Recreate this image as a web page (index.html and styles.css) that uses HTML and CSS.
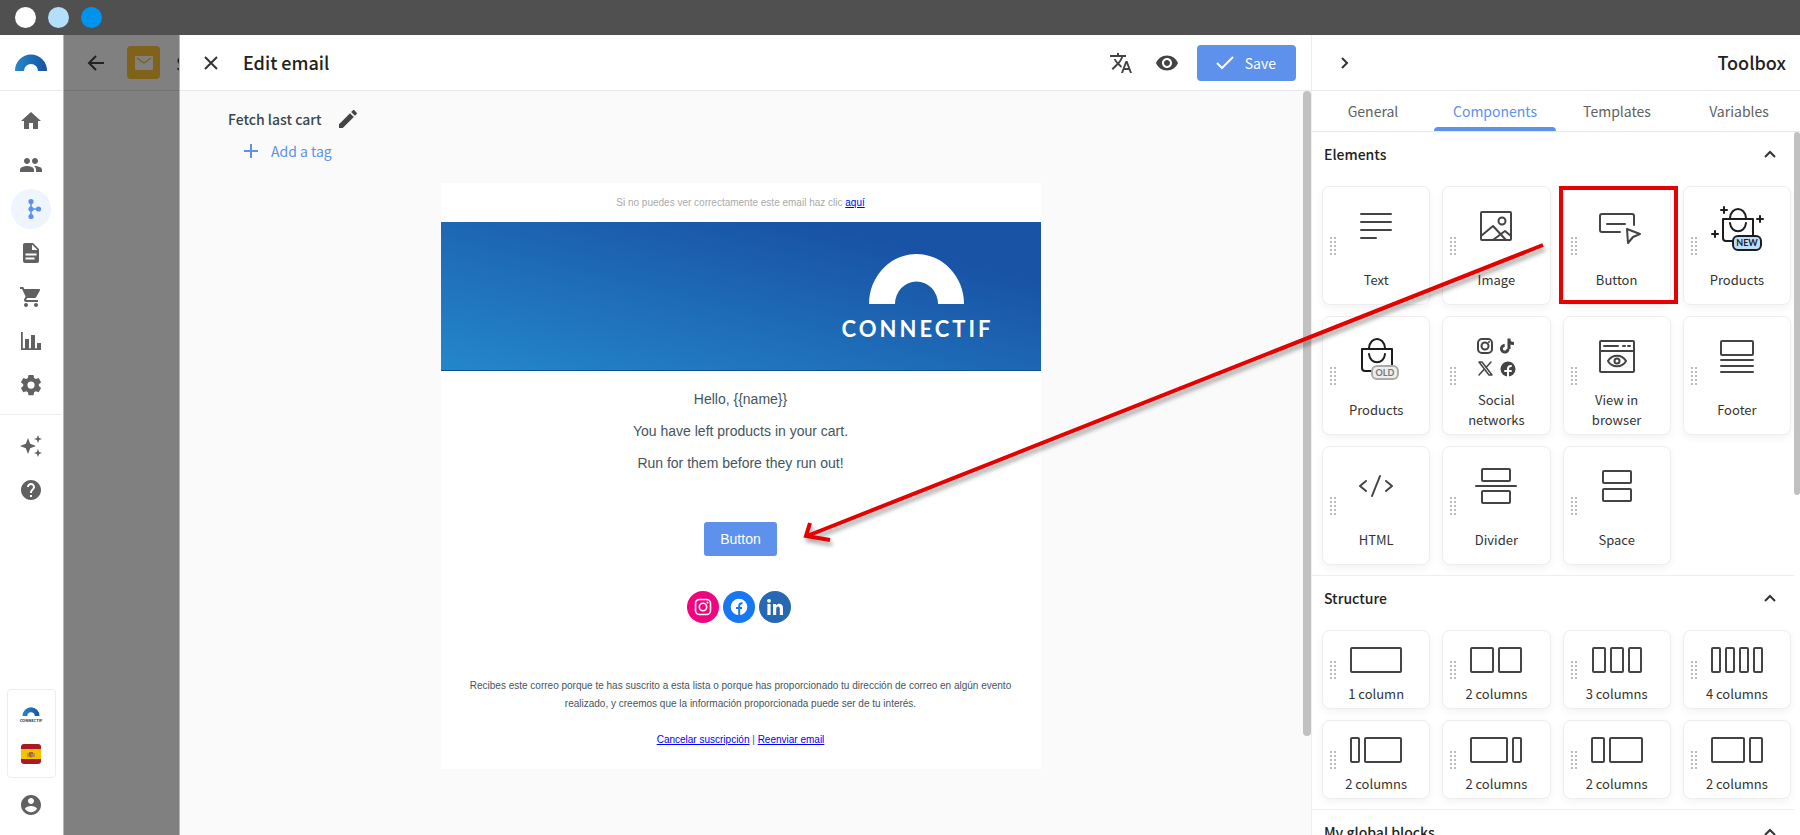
FILE: index.html
```html
<!DOCTYPE html>
<html lang="en">
<head>
    <meta charset="UTF-8">
    <meta name="viewport" content="width=device-width, initial-scale=1.0">
    <title>Edit email</title>
    <link rel="stylesheet" href="styles.css">
</head>
<body>
    <div class="window-bar">
        <span class="dot white"></span>
        <span class="dot light"></span>
        <span class="dot blue"></span>
    </div>

    <div class="app">
        <!-- Sidebar -->
        <nav class="sidebar">
            <a class="brand" href="#" aria-label="Connectif">
                <svg width="32" height="17" viewBox="0 0 32 17"><defs><linearGradient id="arc" x1="0" x2="1"><stop offset="0" stop-color="#2588cc"/><stop offset="1" stop-color="#1851a3"/></linearGradient></defs><path fill="url(#arc)" d="M0 17a16 16.500 0 0 1 32 0h-9a7 7 0 0 0-14 0z"/></svg>
            </a>
            <div class="nav-group">
                <a href="#" aria-label="Home"><svg viewBox="0 0 24 24"><path d="M10 20v-6h4v6h5v-8h3L12 3 2 12h3v8z"/></svg></a>
                <a href="#" aria-label="Contacts"><svg viewBox="0 0 24 24"><path d="M16 11c1.660 0 2.990-1.340 2.990-3S17.660 5 16 5c-1.660 0-3 1.340-3 3s1.340 3 3 3zm-8 0c1.660 0 2.990-1.340 2.990-3S9.660 5 8 5C6.340 5 5 6.340 5 8s1.340 3 3 3zm0 2c-2.330 0-7 1.170-7 3.500V19h14v-2.500c0-2.330-4.670-3.500-7-3.500zm8 0c-.29 0-.62.020-.97.050 1.160.84 1.970 1.970 1.970 3.450V19h6v-2.500c0-2.330-4.670-3.500-7-3.500z"/></svg></a>
                <a class="active" href="#" aria-label="Workflows"><svg viewBox="0 0 24 24"><path d="M11.200 4h1.600v16h-1.600zM12 11.200h8v1.600h-8z"/><circle cx="12" cy="4.500" r="2.600"/><circle cx="12" cy="12" r="2.600"/><circle cx="12" cy="19.500" r="2.600"/><circle cx="19.500" cy="12" r="2.600"/></svg></a>
                <a href="#" aria-label="Content"><svg viewBox="0 0 24 24"><path fill-rule="evenodd" d="M14 2H6c-1.100 0-2 .9-2 2v16c0 1.100.9 2 2 2h12c1.100 0 2-.9 2-2V8l-6-6zm1.500 16.500H6.500v-2h9zm2-4h-11v-2h11zM13 9V3.500L18.500 9H13z"/></svg></a>
                <a href="#" aria-label="Store"><svg viewBox="0 0 24 24"><path d="M7 18c-1.100 0-1.990.9-1.990 2S5.900 22 7 22s2-.9 2-2-.9-2-2-2zM1 2v2h2l3.600 7.590-1.350 2.450c-.16.280-.25.610-.25.960 0 1.100.9 2 2 2h12v-2H7.420c-.14 0-.25-.11-.25-.25l.03-.12.900-1.630h7.450c.75 0 1.410-.41 1.750-1.030l3.580-6.490c.08-.14.120-.31.120-.48 0-.55-.45-1-1-1H5.210l-.94-2H1zm16 16c-1.100 0-1.990.9-1.990 2s.890 2 1.990 2 2-.9 2-2-.9-2-2-2z"/></svg></a>
                <a href="#" aria-label="Reports"><svg viewBox="0 0 24 24"><path d="M2 3h1.800v16.200H6V10h4v9.200h2V6h4v13.200h2V14h4v7H2z"/></svg></a>
                <a href="#" aria-label="Settings"><svg viewBox="0 0 24 24"><path fill-rule="evenodd" d="M9.500 2h5l.6 3 1.700 1 2.900-1 2.400 4.200-2.300 2v1.800l2.300 2-2.400 4.200-2.900-1-1.700 1-.6 3h-5l-.6-3-1.700-1-2.900 1L1.900 15l2.300-2v-1.800l-2.300-2L4.300 5l2.900 1 1.700-1zM12 8.500a3.600 3.600 0 1 0 0 7.200 3.600 3.600 0 0 0 0-7.200z"/></svg></a>
            </div>
            <div class="nav-group second">
                <a href="#" aria-label="Assistant"><svg viewBox="0 0 24 24"><path d="M9 4l2.200 5.800L17 12l-5.800 2.200L9 20l-2.200-5.800L1 12l5.800-2.200zM19 1l1.100 2.900L23 5l-2.900 1.100L19 9l-1.100-2.900L15 5l2.900-1.100zM19 15l1.100 2.900L23 19l-2.900 1.100L19 23l-1.100-2.900L15 19l2.900-1.100z"/></svg></a>
                <a href="#" aria-label="Help"><svg viewBox="0 0 24 24"><path d="M12 2C6.480 2 2 6.480 2 12s4.480 10 10 10 10-4.480 10-10S17.520 2 12 2zm1 17h-2v-2h2v2zm2.070-7.750l-.9.920C13.450 12.900 13 13.500 13 15h-2v-.5c0-1.100.45-2.100 1.170-2.830l1.240-1.260c.37-.36.590-.86.590-1.410 0-1.100-.9-2-2-2s-2 .9-2 2H8c0-2.210 1.790-4 4-4s4 1.790 4 4c0 .88-.36 1.680-.93 2.250z"/></svg></a>
            </div>
            <div class="account">
                <a class="store-logo" href="#">
                    <svg width="18" height="9" viewBox="0 0 32 17"><path fill="url(#arc)" d="M0 17a16 16.500 0 0 1 32 0h-9a7 7 0 0 0-14 0z"/></svg>
                    <span>CONNECTIF</span>
                </a>
                <a class="flag" href="#" aria-label="Español"><svg width="20" height="20" viewBox="0 0 20 20"><rect width="20" height="20" rx="3" fill="#a91a20"/><path fill="#f3c300" d="M0 5h20v10H0z"/><path fill="#a5602c" d="M6.500 9h1v4h-1zM12.500 9h1v4h-1zM8 8h4v4.500l-2 1-2-1z"/><path fill="#8c9a8a" d="M10 10h2v2h-2z"/></svg></a>
            </div>
            <a class="profile" href="#" aria-label="Profile"><svg viewBox="0 0 24 24"><path d="M12 2C6.480 2 2 6.480 2 12s4.480 10 10 10 10-4.480 10-10S17.520 2 12 2zm0 3c1.660 0 3 1.340 3 3s-1.340 3-3 3-3-1.340-3-3 1.340-3 3-3zm0 14.200c-2.500 0-4.710-1.280-6-3.220.03-1.990 4-3.080 6-3.080 1.990 0 5.970 1.090 6 3.080-1.290 1.940-3.500 3.220-6 3.220z"/></svg></a>
        </nav>

        <!-- Workflow behind the dialog -->
        <div class="backdrop">
            <div class="backdrop-head">
                <svg width="18" height="18" viewBox="0 0 18 18"><path d="M17 9H2M9 2L2 9l7 7" fill="none" stroke="#222" stroke-width="2"/></svg>
                <span class="mail-badge"><svg width="18" height="14" viewBox="0 0 18 14"><rect width="18" height="14" rx="1" fill="#808080"/><path d="M2 2l7 5 7-5" fill="none" stroke="#80621a" stroke-width="1.500"/></svg></span>
                <span class="backdrop-title">S</span>
            </div>
        </div>

        <!-- Editor -->
        <main class="editor">
            <header class="editor-head">
                <button class="icon-btn" aria-label="Close"><svg width="16" height="16" viewBox="0 0 16 16"><path d="M2 2l12 12M14 2L2 14" fill="none" stroke="#333" stroke-width="2"/></svg></button>
                <h1>Edit email</h1>
                <button class="icon-btn" aria-label="Translate"><svg width="24" height="24" viewBox="0 0 24 24"><path fill="#444" d="M12.870 15.070l-2.540-2.510.03-.03c1.740-1.940 2.980-4.170 3.710-6.530H17V4h-7V2H8v2H1v1.990h11.170C11.500 7.920 10.440 9.750 9 11.350 8.070 10.320 7.300 9.190 6.690 8h-2c.73 1.630 1.730 3.170 2.980 4.560l-5.090 5.020L4 19l5-5 3.110 3.110.76-2.040zM18.500 10h-2L12 22h2l1.120-3h4.750L21 22h2l-4.500-12zm-2.620 7l1.620-4.330L19.120 17h-3.240z"/></svg></button>
                <button class="icon-btn" aria-label="Preview"><svg width="24" height="24" viewBox="0 0 24 24"><path fill="#444" d="M12 4.500C7 4.500 2.730 7.610 1 12c1.730 4.390 6 7.500 11 7.500s9.270-3.110 11-7.500c-1.730-4.390-6-7.500-11-7.500zM12 17c-2.760 0-5-2.240-5-5s2.240-5 5-5 5 2.240 5 5-2.240 5-5 5zm0-8c-1.660 0-3 1.340-3 3s1.340 3 3 3 3-1.340 3-3-1.340-3-3-3z"/></svg></button>
                <button class="save"><svg width="20" height="16" viewBox="0 0 20 16"><path d="M2 8l5 5L18 2" fill="none" stroke="#fff" stroke-width="2"/></svg>Save</button>
            </header>
            <div class="canvas">
                <div class="email-name">
                    <span>Fetch last cart</span>
                    <button class="icon-btn" aria-label="Rename"><svg width="24" height="24" viewBox="0 0 24 24"><path fill="#444" d="M3 17.250V21h3.750L17.810 9.940l-3.750-3.750L3 17.250zM20.710 7.040c.39-.39.390-1.020 0-1.410l-2.340-2.340c-.39-.39-1.020-.39-1.410 0l-1.830 1.830 3.750 3.750 1.830-1.830z"/></svg></button>
                </div>
                <button class="add-tag"><svg width="16" height="16" viewBox="0 0 16 16"><path d="M8 1v14M1 8h14" fill="none" stroke="#5d91ec" stroke-width="2"/></svg>Add a tag</button>

                <article class="email">
                    <p class="view-online">Si no puedes ver correctamente este email haz clic <a href="#">aquí</a></p>
                    <div class="banner">
                        <div class="banner-logo">
                            <svg width="95" height="51" viewBox="0 0 95 51"><path fill="#fff" d="M0 51a47.500 50 0 0 1 95 0H69a21 22 0 0 0-43 0z"/></svg>
                            <span>CONNECTIF</span>
                        </div>
                    </div>
                    <div class="message">
                        <p>Hello, {{name}}</p>
                        <p>You have left products in your cart.</p>
                        <p>Run for them before they run out!</p>
                    </div>
                    <button class="email-btn">Button</button>
                    <div class="social">
                        <a href="#" aria-label="Instagram"><svg viewBox="0 0 32 32"><circle cx="16" cy="16" r="16" fill="#f0047f"/><g fill="none" stroke="#fff" stroke-width="1.600"><rect x="8.500" y="8.500" width="15" height="15" rx="4"/><circle cx="16" cy="16" r="3.700"/></g><circle cx="20.500" cy="11.500" r="1" fill="#fff"/></svg></a>
                        <a href="#" aria-label="Facebook"><svg viewBox="0 0 32 32"><circle cx="16" cy="16" r="16" fill="#1877f2"/><circle cx="16" cy="16" r="8.300" fill="#fff"/><path d="M16.200 25v-10c0-2 1-2.800 3.300-2.600M13 17h6" fill="none" stroke="#1877f2" stroke-width="2"/></svg></a>
                        <a href="#" aria-label="LinkedIn"><svg viewBox="0 0 32 32"><circle cx="16" cy="16" r="16" fill="#2867b2"/><circle cx="10" cy="9.800" r="1.900" fill="#fff"/><path fill="#fff" d="M8.400 13h3.200v11H8.400zM14 13h3v1.500c1.500-2.600 7-2.600 7 2.500v7h-3.200v-6.200c0-3-3.600-2.800-3.600 0V24H14z"/></svg></a>
                    </div>
                    <footer class="legal">
                        <p>Recibes este correo porque te has suscrito a esta lista o porque has proporcionado tu dirección de correo en algún evento realizado, y creemos que la información proporcionada puede ser de tu interés.</p>
                        <p><a href="#">Cancelar suscripción</a> | <a href="#">Reenviar email</a></p>
                    </footer>
                </article>
            </div>
            <div class="scroll-thumb"></div>
        </main>

        <!-- Toolbox -->
        <aside class="toolbox">
            <header class="toolbox-head">
                <button class="icon-btn" aria-label="Collapse"><svg width="12" height="14" viewBox="0 0 12 14"><path d="M3 2l5 5-5 5" fill="none" stroke="#333" stroke-width="2"/></svg></button>
                <h2>Toolbox</h2>
            </header>
            <div class="tabs">
                <button>General</button>
                <button class="active">Components</button>
                <button>Templates</button>
                <button>Variables</button>
            </div>
            <div class="toolbox-body">
                <section>
                    <div class="section-head">
                        <h3>Elements</h3>
                        <button class="icon-btn" aria-label="Collapse elements"><svg width="14" height="10" viewBox="0 0 14 10"><path d="M2 8l5-5 5 5" fill="none" stroke="#333" stroke-width="2"/></svg></button>
                    </div>
                    <div class="cards">
                        <button class="card">
                            <span class="glyph"><svg width="32" height="28" viewBox="0 0 32 28"><path d="M1 2h30M1 10h30M1 18h30M1 26h15"/></svg></span>
                            <span class="label">Text</span>
                        </button>
                        <button class="card">
                            <span class="glyph"><svg width="32" height="30" viewBox="0 0 32 30"><rect x="1" y="1" width="30" height="28" rx="1"/><circle cx="22" cy="10" r="3.500"/><path d="M1 25l12-10 13 14M13 29l12-9 6 5"/></svg></span>
                            <span class="label">Image</span>
                        </button>
                        <button class="card marked">
                            <span class="glyph"><svg width="42" height="32" viewBox="-3 -3 42 32"><path d="M21 19H3a2 2 0 0 1-2-2V3a2 2 0 0 1 2-2h30a2 2 0 0 1 2 2v9M8 11h18M28 16l13 5-7 3-5 6z"/></svg></span>
                            <span class="label">Button</span>
                        </button>
                        <button class="card">
                            <span class="glyph"><svg width="52" height="44" viewBox="0 -3 52 44"><g stroke="#1d1d1d"><path d="M12 12h30v22H15a3 3 0 0 1-3-3zM19 11c1-12 15-12 16 0M19 16c1 11 15 11 16 0M13 0v6M10 3h6M49 9v6M46 12h6M4 24v6M1 27h6"/><rect x="22" y="29" width="28" height="14" rx="5" fill="#bbdefb"/></g><text x="36" y="39">NEW</text></svg></span>
                            <span class="label">Products</span>
                        </button>
                        <button class="card">
                            <span class="glyph"><svg width="38" height="42" viewBox="-4 -3 38 42"><g stroke="#1d1d1d"><path d="M1 11h30v22H4a3 3 0 0 1-3-3zM8 10c1-12 15-12 16 0M8 16c1 11 15 11 16 0"/></g><rect x="11" y="28" width="26" height="13" rx="5" fill="#eee" stroke="#aaa"/><text class="old" x="24" y="38">OLD</text></svg></span>
                            <span class="label">Products</span>
                        </button>
                        <button class="card">
                            <span class="glyph"><svg width="38" height="40" viewBox="0 -2 38 40"><rect x="1" y="1" width="14" height="14" rx="4"/><circle cx="8" cy="8" r="3.500"/><circle cx="12" cy="4" r="1" fill="#444" stroke="none"/><path stroke-width="3" stroke-linecap="butt" d="M31 10.500a3.300 3.300 0 1 1-3.300-3M32 0.500v10.500M32 1.500c0 3 2 4 5 4"/><path stroke-width="1.500" d="M2 24h3l10 13h-3zM14 24L9 29.500M7 31.500L2 37"/><circle cx="31" cy="31" r="7.500" fill="#444" stroke="none"/><path stroke="#fff" d="M31 39v-8c0-2 1-3 3-3M28 33h6"/></svg></span>
                            <span class="label">Social networks</span>
                        </button>
                        <button class="card">
                            <span class="glyph"><svg width="36" height="33" viewBox="0 0 36 33"><rect x="1" y="1" width="34" height="31" rx="1"/><path d="M1 11h34M5 6h14M24 6h2M29 6h2M9 21c4-7 14-7 18 0-4 7-14 7-18 0z"/><circle cx="18" cy="21" r="2.500"/></svg></span>
                            <span class="label">View in browser</span>
                        </button>
                        <button class="card">
                            <span class="glyph"><svg width="34" height="33" viewBox="0 0 34 33"><rect x="1" y="1" width="32" height="14" rx="1"/><path d="M1 20h32M1 26h32M1 32h32"/></svg></span>
                            <span class="label">Footer</span>
                        </button>
                        <button class="card">
                            <span class="glyph"><svg width="34" height="22" viewBox="0 0 34 22"><path d="M7 6l-6 5 6 5M27 6l6 5-6 5M21 1l-8 20"/></svg></span>
                            <span class="label">HTML</span>
                        </button>
                        <button class="card">
                            <span class="glyph"><svg width="42" height="36" viewBox="0 0 42 36"><rect x="7" y="1" width="28" height="12" rx="1"/><path d="M1 18h40"/><rect x="7" y="23" width="28" height="12" rx="1"/></svg></span>
                            <span class="label">Divider</span>
                        </button>
                        <button class="card">
                            <span class="glyph"><svg width="30" height="32" viewBox="0 0 30 32"><rect x="1" y="1" width="28" height="12" rx="1"/><rect x="1" y="19" width="28" height="12" rx="1"/></svg></span>
                            <span class="label">Space</span>
                        </button>
                    </div>
                </section>
                <section>
                    <div class="section-head">
                        <h3>Structure</h3>
                        <button class="icon-btn" aria-label="Collapse structure"><svg width="14" height="10" viewBox="0 0 14 10"><path d="M2 8l5-5 5 5" fill="none" stroke="#333" stroke-width="2"/></svg></button>
                    </div>
                    <div class="cards small">
                        <button class="card">
                            <span class="glyph"><svg width="52" height="26" viewBox="0 0 52 26"><rect x="1" y="1" width="50" height="24" rx="1"/></svg></span>
                            <span class="label">1 column</span>
                        </button>
                        <button class="card">
                            <span class="glyph"><svg width="52" height="26" viewBox="0 0 52 26"><rect x="1" y="1" width="22" height="24" rx="1"/><rect x="29" y="1" width="22" height="24" rx="1"/></svg></span>
                            <span class="label">2 columns</span>
                        </button>
                        <button class="card">
                            <span class="glyph"><svg width="50" height="26" viewBox="0 0 50 26"><rect x="1" y="1" width="12" height="24" rx="1"/><rect x="19" y="1" width="12" height="24" rx="1"/><rect x="37" y="1" width="12" height="24" rx="1"/></svg></span>
                            <span class="label">3 columns</span>
                        </button>
                        <button class="card">
                            <span class="glyph"><svg width="52" height="26" viewBox="0 0 52 26"><rect x="1" y="1" width="8" height="24" rx="1"/><rect x="15" y="1" width="8" height="24" rx="1"/><rect x="29" y="1" width="8" height="24" rx="1"/><rect x="43" y="1" width="8" height="24" rx="1"/></svg></span>
                            <span class="label">4 columns</span>
                        </button>
                        <button class="card">
                            <span class="glyph"><svg width="52" height="26" viewBox="0 0 52 26"><rect x="1" y="1" width="8" height="24" rx="1"/><rect x="15" y="1" width="36" height="24" rx="1"/></svg></span>
                            <span class="label">2 columns</span>
                        </button>
                        <button class="card">
                            <span class="glyph"><svg width="52" height="26" viewBox="0 0 52 26"><rect x="1" y="1" width="36" height="24" rx="1"/><rect x="43" y="1" width="8" height="24" rx="1"/></svg></span>
                            <span class="label">2 columns</span>
                        </button>
                        <button class="card">
                            <span class="glyph"><svg width="52" height="26" viewBox="0 0 52 26"><rect x="1" y="1" width="12" height="24" rx="1"/><rect x="19" y="1" width="32" height="24" rx="1"/></svg></span>
                            <span class="label">2 columns</span>
                        </button>
                        <button class="card">
                            <span class="glyph"><svg width="52" height="26" viewBox="0 0 52 26"><rect x="1" y="1" width="32" height="24" rx="1"/><rect x="39" y="1" width="12" height="24" rx="1"/></svg></span>
                            <span class="label">2 columns</span>
                        </button>
                    </div>
                </section>
                <section>
                    <div class="section-head">
                        <h3>My global blocks</h3>
                        <button class="icon-btn" aria-label="Collapse global blocks"><svg width="14" height="10" viewBox="0 0 14 10"><path d="M2 8l5-5 5 5" fill="none" stroke="#333" stroke-width="2"/></svg></button>
                    </div>
                </section>
                <div class="scroll-thumb"></div>
            </div>
        </aside>

        <!-- Drag hint -->
        <svg class="drag-arrow" width="750" height="320" viewBox="0 0 750 320"><path d="M743 10L7 301M10 288L6 301L30 305"/></svg>
    </div>
</body>
</html>
```
FILE: styles.css
```css
* {
    box-sizing: border-box;
}
body {
    font-family: "Noto Sans CJK SC", "Open Sans", sans-serif;
    margin: 0;
    height: 100vh;
    display: flex;
    flex-direction: column;
    overflow: hidden;
    color: #222;
    font-size: 14px;
}
h1, h2, h3, p {
    margin: 0;
}
button {
    font-family: inherit;
    border: none;
    background: none;
    padding: 0;
    cursor: pointer;
}
svg {
    display: block;
    flex: none;
    overflow: visible;
}
.window-bar {
    background: #505050;
    height: 35px;
    flex: none;
    display: flex;
    align-items: center;
    gap: 12px;
    padding-left: 15px;
}
.dot {
    width: 21px;
    height: 21px;
    border-radius: 50%;
}
.dot.white { background: #fff; }
.dot.light { background: #b3dffb; }
.dot.blue { background: #0093ee; }
.app {
    flex: 1;
    min-height: 0;
    display: flex;
    position: relative;
}

/* sidebar */
.sidebar {
    width: 64px;
    flex: none;
    display: flex;
    flex-direction: column;
    align-items: center;
    padding-right: 1px;
    border-right: 1px solid #b5b5b5;
    background: #fff;
}
.brand {
    width: 100%;
    height: 56px;
    display: flex;
    align-items: center;
    justify-content: center;
    border-bottom: 1px solid #e8e8e8;
}
.nav-group {
    width: 100%;
    display: flex;
    flex-direction: column;
    align-items: center;
    gap: 4px;
    padding: 10px 0 9px;
}
.nav-group.second {
    padding-top: 11px;
    border-top: 1px solid #eee;
}
.nav-group a {
    width: 40px;
    height: 40px;
    display: flex;
    align-items: center;
    justify-content: center;
    border-radius: 50%;
}
.nav-group svg, .profile svg {
    width: 24px;
    height: 24px;
    fill: #616161;
}
.nav-group a.active {
    background: #eff5fe;
}
.nav-group a.active svg {
    fill: #5d91ec;
}
.account {
    width: 49px;
    height: 89px;
    margin-top: auto;
    border: 1px solid #eee;
    border-radius: 4px;
    display: flex;
    flex-direction: column;
    align-items: center;
    gap: 20px;
    padding-top: 17px;
}
.store-logo {
    display: flex;
    flex-direction: column;
    align-items: center;
    color: #26334d;
    text-decoration: none;
    font-size: 4px;
    font-weight: bold;
    line-height: 8px;
}
.profile {
    margin: 15px 0 18px;
}

/* dimmed page */
.backdrop {
    width: 116px;
    flex: none;
    background: #808080;
    border-right: 1px solid #b5b5b5;
    overflow: hidden;
}
.backdrop-head {
    height: 56px;
    display: flex;
    align-items: center;
    padding-left: 23px;
    border-bottom: 1px solid #747474;
}
.mail-badge {
    width: 33px;
    height: 33px;
    flex: none;
    margin: 0 16px 0 22px;
    border-radius: 4px;
    background: #80621a;
    display: flex;
    align-items: center;
    justify-content: center;
}
.backdrop-title {
    font-size: 18px;
    font-weight: 500;
}

/* editor */
.editor {
    flex: 1;
    min-width: 0;
    display: flex;
    flex-direction: column;
    position: relative;
    background: #fafafa;
}
.editor-head {
    height: 56px;
    flex: none;
    display: flex;
    align-items: center;
    gap: 22px;
    padding: 0 15px 0 23px;
    background: #fff;
    border-bottom: 1px solid #e8e8e8;
}
.editor-head h1 {
    flex: 1;
    padding: 0 0 2px 2px;
    font-size: 18px;
    font-weight: 500;
}
.save {
    display: flex;
    align-items: center;
    gap: 10px;
    height: 36px;
    padding: 0 20px 0 18px;
    margin-left: -4px;
    border-radius: 4px;
    background: #5d91ec;
    color: #fff;
    font-size: 14px;
}
.canvas {
    flex: 1;
    min-height: 0;
    overflow: hidden;
    padding: 16px 10px 0 0;
}
.email-name {
    display: flex;
    align-items: center;
    gap: 14px;
    height: 24px;
    padding-left: 48px;
    font-weight: 500;
    color: #37474f;
}
.add-tag {
    display: flex;
    align-items: center;
    gap: 12px;
    height: 26px;
    margin: 7px 0 0 63px;
    font-size: 14px;
    color: #5d91ec;
}
.scroll-thumb {
    position: absolute;
    top: 56px;
    right: 0;
    width: 8px;
    height: 645px;
    border-radius: 4px;
    background: #c1c1c1;
}

/* email preview */
.email {
    width: 600px;
    margin: 19px auto 0;
    background: #fff;
    font-family: "Liberation Sans", Arial, sans-serif;
    color: #455560;
    text-align: center;
}
.email p a {
    color: #00f;
}
.view-online {
    padding: 13px 0 12px;
    font-size: 10px;
    line-height: 14px;
    color: #aaa;
}
.banner {
    height: 149px;
    display: flex;
    justify-content: flex-end;
    padding: 31px 47px 0 0;
    background: linear-gradient(to top right, #2487cb, #1953a5 80%);
    border-bottom: 1px solid #0d4f91;
}
.banner-logo {
    display: flex;
    flex-direction: column;
    align-items: center;
    gap: 13px;
    color: #fff;
    font-family: Lato, sans-serif;
    font-size: 22px;
    font-weight: bold;
    line-height: 24px;
}
.banner-logo span {
    padding-left: 3px;
    letter-spacing: 3px;
}
.message {
    padding: 12px 0 14px;
    font-size: 14px;
    line-height: 32px;
}
.email-btn {
    height: 34px;
    margin-top: 29px;
    padding: 0 16px;
    border-radius: 3px;
    background: #5d91ec;
    color: #fff;
    font-size: 14px;
}
.social {
    display: flex;
    justify-content: center;
    gap: 4px;
    margin: 35px 4px 0 0;
}
.social svg {
    width: 32px;
    height: 32px;
}
.legal {
    padding: 54px 24px 20px;
    font-size: 10px;
    line-height: 18px;
}
.legal p + p {
    margin-top: 18px;
}

/* toolbox */
.toolbox {
    width: 489px;
    flex: none;
    display: flex;
    flex-direction: column;
    border-left: 1px solid #eee;
    background: #fff;
}
.toolbox-head {
    height: 56px;
    flex: none;
    display: flex;
    align-items: center;
    justify-content: space-between;
    padding: 0 14px 0 27px;
    border-bottom: 1px solid #e8e8e8;
}
.toolbox-head h2 {
    padding-bottom: 2px;
    font-size: 18px;
    font-weight: 500;
}
.tabs {
    height: 41px;
    flex: none;
    display: grid;
    grid-template-columns: repeat(4, 1fr);
    border-bottom: 1px solid #e8e8e8;
}
.tabs button {
    color: #616161;
    font-size: 14px;
    position: relative;
}
.tabs .active {
    color: #5d91ec;
}
.tabs .active::after {
    content: "";
    position: absolute;
    left: 0;
    right: 0;
    bottom: 0;
    height: 4px;
    border-radius: 4px 4px 0 0;
    background: #5d91ec;
}
.toolbox-body {
    flex: 1;
    min-height: 0;
    overflow: hidden;
    position: relative;
    padding-right: 6px;
}
.toolbox-body .scroll-thumb {
    top: 0;
    width: 6px;
    height: 363px;
}
section + section {
    border-top: 1px solid #eee;
}
.section-head {
    height: 46px;
    display: flex;
    align-items: center;
    justify-content: space-between;
    padding: 0 17px 2px 12px;
}
.section-head h3 {
    font-size: 14px;
    font-weight: 500;
}
.cards {
    display: grid;
    grid-template-columns: repeat(4, 1fr);
    gap: 11px 12px;
    padding: 8px 3px 10px 10px;
}
.card {
    height: 119px;
    position: relative;
    display: flex;
    flex-direction: column;
    align-items: center;
    border: 1px solid #eee;
    border-radius: 8px;
    background: #fff;
    box-shadow: 0 3px 8px rgba(0, 0, 0, 0.05);
    color: #333;
    font-size: 13px;
    line-height: 20px;
}
/* drag handle */
.card::before {
    content: "";
    position: absolute;
    left: 6px;
    top: 50%;
    width: 8px;
    height: 20px;
    margin-top: -10px;
    background: radial-gradient(circle, #bbb 1px, transparent 1px) 0 0 / 4px 4px;
}
.card.marked::after {
    content: "";
    position: absolute;
    top: -1px;
    left: -5px;
    right: -8px;
    bottom: 0;
    border: 4px solid #e60000;
}
.glyph {
    height: 78px;
    flex: none;
    display: flex;
    align-items: center;
}
.glyph svg {
    fill: none;
    stroke: #444;
    stroke-width: 2;
    stroke-linejoin: round;
    stroke-linecap: round;
}
.glyph text {
    fill: #222;
    stroke: none;
    font-family: Lato, sans-serif;
    font-size: 9px;
    font-weight: bold;
    text-anchor: middle;
}
.glyph text.old {
    fill: #777;
}
.label {
    width: 68px;
    height: 30px;
    display: flex;
    align-items: center;
    justify-content: center;
}
.small .card {
    height: 79px;
}
.small .glyph {
    height: 58px;
}
.small .label {
    height: 10px;
}

.drag-arrow {
    position: absolute;
    top: 200px;
    right: 250px;
    fill: none;
    stroke: #e60000;
    stroke-width: 4;
    pointer-events: none;
    filter: drop-shadow(2px 4px 2px rgba(0, 0, 0, 0.35));
}
```
